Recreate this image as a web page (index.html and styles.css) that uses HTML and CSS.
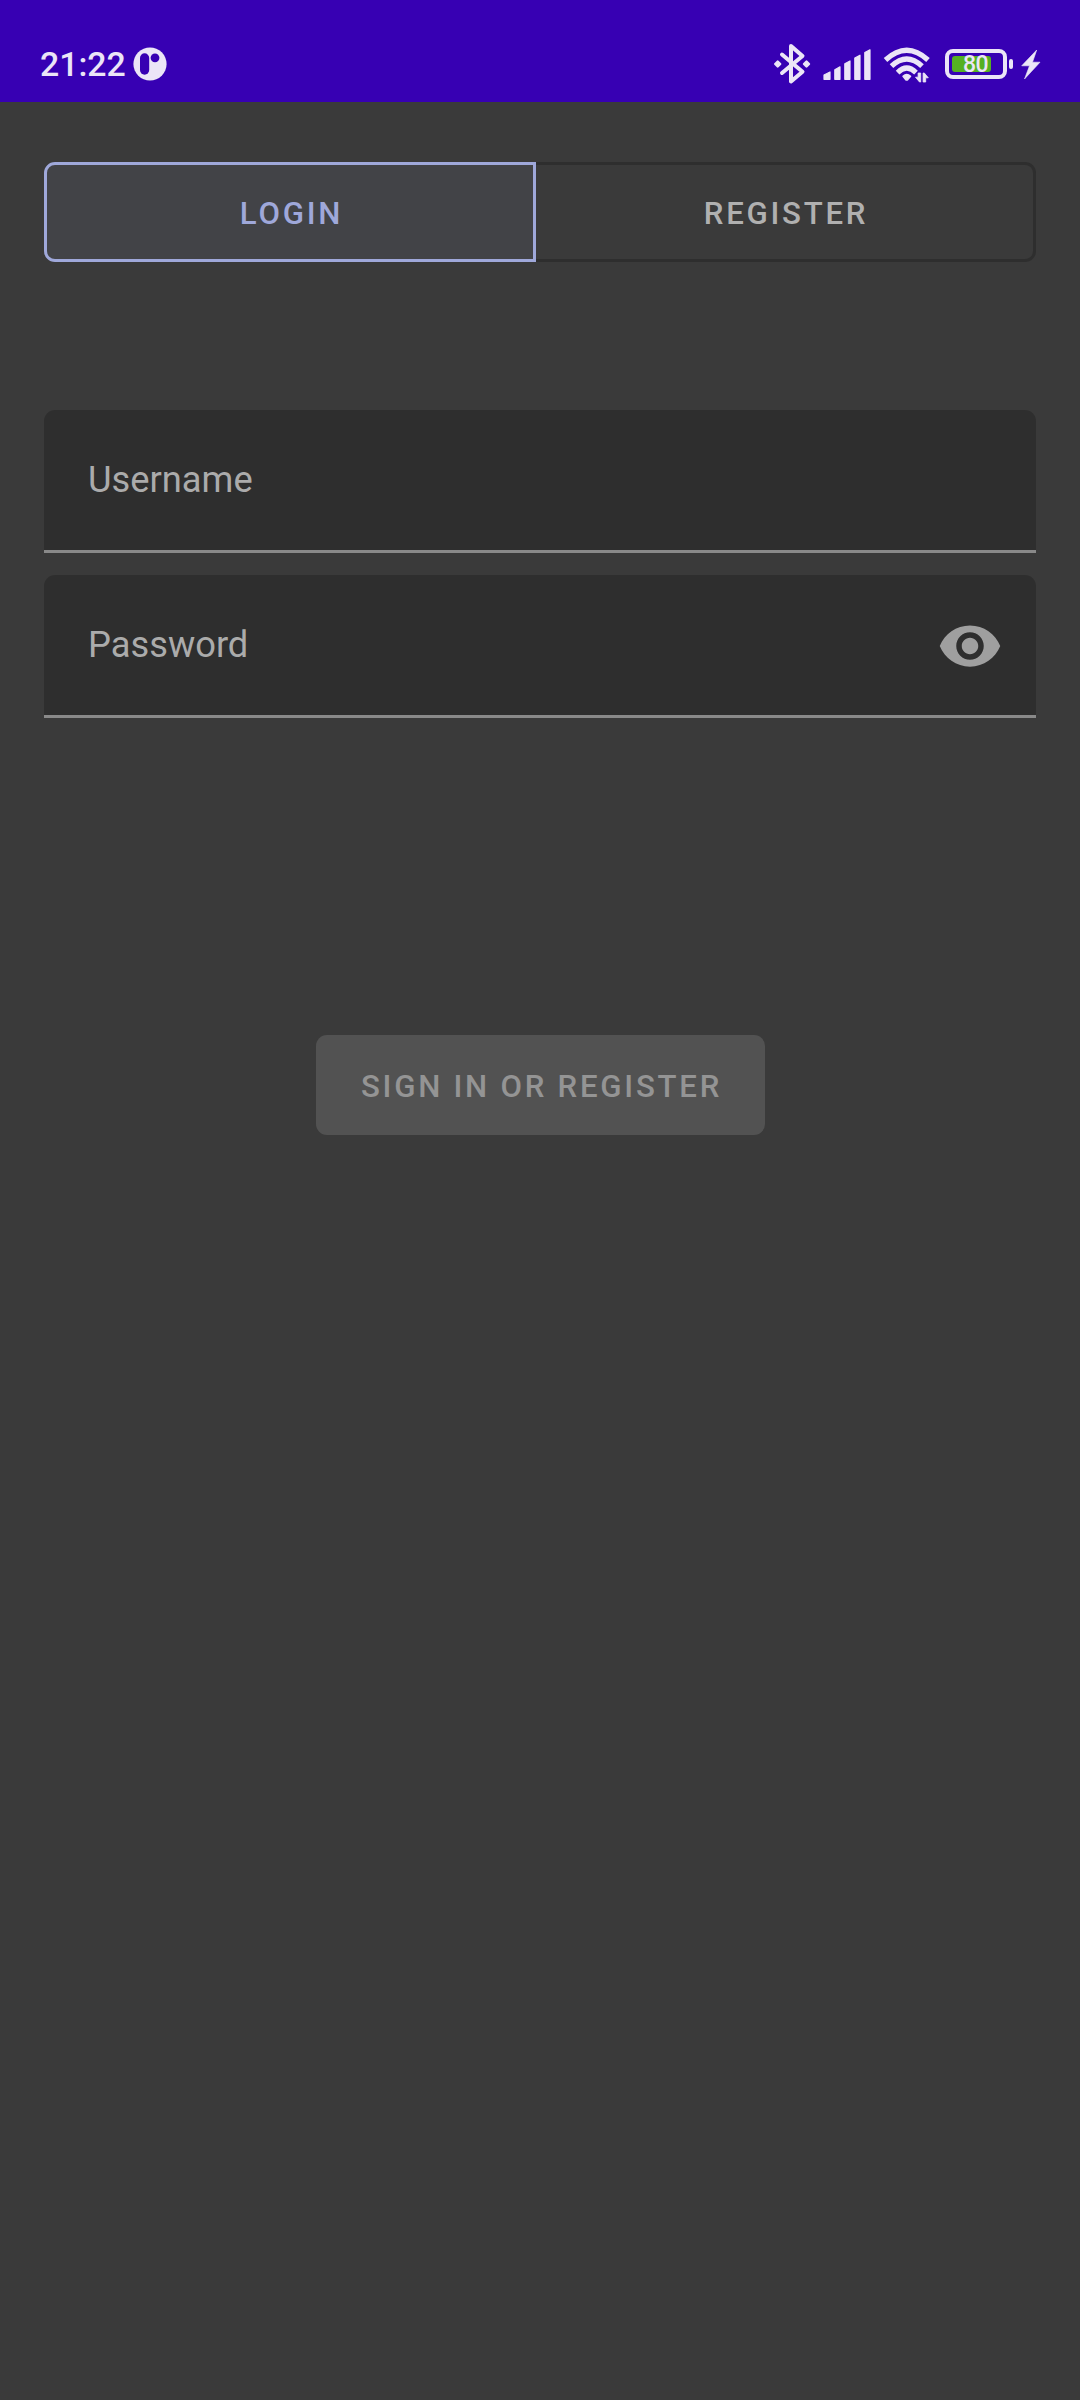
FILE: index.html
```html
<!DOCTYPE html>
<html lang="en">
<head>
<meta charset="utf-8">
<title>Login</title>
<link rel="stylesheet" href="styles.css">
</head>
<body>
<header class="status-bar">
  <span class="clock">21:22</span>
  <svg class="app-icon" viewBox="0 0 34 34"><circle cx="17" cy="17" r="16.6" fill="#ebe5f7"/><rect x="7" y="6.3" width="9.2" height="21.4" rx="4.6" fill="#3700b3"/><circle cx="22" cy="10.8" r="4.4" fill="#3700b3"/></svg>
  <svg class="bluetooth" viewBox="773 43 38 42"><path d="M782 54.5 802.5 71.8 791 81.5V46L802.5 56 782 73" fill="none" stroke="#ebe5f7" stroke-width="4" stroke-linecap="round" stroke-linejoin="round"/><path d="M777.7 61.5l2.5 2.5-2.5 2.5-2.5-2.5zM806.5 61.5l2.5 2.5-2.5 2.5-2.5-2.5z" fill="#ebe5f7" stroke="#ebe5f7" stroke-width="2.4" stroke-linejoin="round"/></svg>
  <svg class="signal" viewBox="823 49 48 31"><path d="M824 75l6-3v7.3h-6zM834.8 69.7l5.2-2.8v12.4h-5.2zM844.8 63.8l5.2-2.8v18.3h-5.2zM854.8 58l5.2-2.8v24.1h-5.2zM864.8 52.5l5.2-2.7v29.5h-5.2z" fill="#ebe5f7" stroke="#ebe5f7" stroke-width="1.2" stroke-linejoin="round"/></svg>
  <svg class="wifi" viewBox="883 45 48 40"><g fill="none" stroke="#ebe5f7" stroke-width="5.2"><path d="M885.5 60Q906.7 40.5 928 60M891.5 66.2Q906.7 51.8 922 66.2M897.6 72.6Q906.7 63.6 916 72.6"/></g><path d="M903 76.3Q906.7 72.6 910.6 76.3L907.8 79.6Q906.7 80.5 905.6 79.6z" fill="#ebe5f7" stroke="#ebe5f7" stroke-width="1.4" stroke-linejoin="round"/><path d="M920.7 73v9h-1.2l-4-4.8h2.6V73zM923.1 82v-9h1.2l4 4.8h-2.6V82z" fill="#ebe5f7" stroke="#ebe5f7" stroke-width=".8"/></svg>
  <span class="battery"><span class="battery-level"></span><span class="battery-text">80</span></span>
  <span class="battery-tip"></span>
  <svg class="bolt" viewBox="1021 49 20 31"><path d="M1036.7 50 1021.7 65.8H1029.5L1024.5 79 1040 62.2H1032.5z" fill="#ebe5f7" stroke="#ebe5f7" stroke-width=".6"/></svg>
</header>
<main class="content">
  <div class="toggle">
    <button class="tab tab-active">LOGIN</button>
    <button class="tab tab-idle">REGISTER</button>
  </div>
  <form class="form">
    <div class="field"><span class="label">Username</span></div>
    <div class="field"><span class="label">Password</span>
      <svg class="eye" viewBox="0 0 24 24"><path fill="#9f9f9f" d="M12 4.5C7 4.5 2.73 7.61 1 12c1.73 4.39 6 7.5 11 7.5s9.27-3.11 11-7.5c-1.73-4.39-6-7.5-11-7.5zM12 17c-2.76 0-5-2.24-5-5s2.24-5 5-5 5 2.24 5 5-2.24 5-5 5zm0-8c-1.66 0-3 1.34-3 3s1.34 3 3 3 3-1.34 3-3-1.34-3-3-3z"/></svg>
    </div>
    <button class="submit" type="button" disabled>SIGN IN OR REGISTER</button>
  </form>
</main>
</body>
</html>
```
FILE: styles.css
```css
* { box-sizing: border-box; }
body {
  margin: 0;
  height: 2400px;
  background: #3a3a3a;
  font-family: Roboto, sans-serif;
}
button {
  padding: 4px 0 0 3px;
  border: 0;
  font: 500 31.2px/36px Roboto, sans-serif;
  letter-spacing: 2.75px;
}
.status-bar {
  display: flex;
  align-items: flex-start;
  height: 102px;
  padding-left: 40px;
  background: #3700b3;
  color: #ebe5f7;
}
.status-bar svg { display: block; flex: none; }
.clock {
  width: 93px;
  margin-top: 45px;
  font-size: 33.8px;
  line-height: 40px;
  font-weight: 500;
}
.app-icon { width: 34px; height: 34px; margin-top: 47px; }
.bluetooth { width: 38px; height: 42px; margin: 43px 12px 0 606px; }
.signal { width: 48px; height: 31px; margin: 49px 12px 0 0; }
.wifi { width: 48px; height: 40px; margin: 45px 14px 0 0; }
.battery {
  display: grid;
  width: 62px;
  height: 30px;
  margin-top: 49px;
  padding: 3px;
  border: 4px solid #ebe5f7;
  border-radius: 8px;
}
.battery-level {
  grid-area: 1 / 1;
  width: 39px;
  height: 16px;
  border-radius: 3px;
  background: #55b022;
}
.battery-text {
  grid-area: 1 / 1;
  padding-left: 11px;
  font-size: 23px;
  line-height: 18px;
  font-weight: 500;
  letter-spacing: -0.6px;
}
.battery-tip {
  width: 4px;
  height: 10px;
  margin: 59px 8px 0 2px;
  border-radius: 2px;
  background: #ebe5f7;
}
.bolt { width: 20px; height: 31px; margin-top: 49px; }
.content { padding: 60px 44px 0; }
.toggle { display: flex; height: 100px; }
.tab { border: 3px solid; }
.tab-active {
  width: 492px;
  border-color: #9fa8da;
  border-radius: 11px 0 0 11px;
  background: #424347;
  color: #9fa8da;
}
.tab-idle {
  flex: 1;
  border-color: #2e2e2e;
  border-left: 0;
  border-radius: 0 11px 11px 0;
  background: transparent;
  color: #b0b0b0;
}
.form {
  display: flex;
  flex-direction: column;
  gap: 22px;
  margin-top: 148px;
}
.field {
  display: flex;
  align-items: center;
  justify-content: space-between;
  height: 143px;
  padding: 0 33px 2px 44px;
  border-radius: 11px 11px 0 0;
  background: linear-gradient(#2e2e2e 140px, #898989 140px);
}
.label {
  padding-bottom: 1px;
  color: #ababab;
  font-size: 36.3px;
  line-height: 44px;
}
.eye { width: 66px; height: 66px; }
.submit {
  align-self: center;
  width: 449px;
  height: 100px;
  margin-top: 295px;
  border-radius: 11px;
  background: #525252;
  color: #949494;
}
```
